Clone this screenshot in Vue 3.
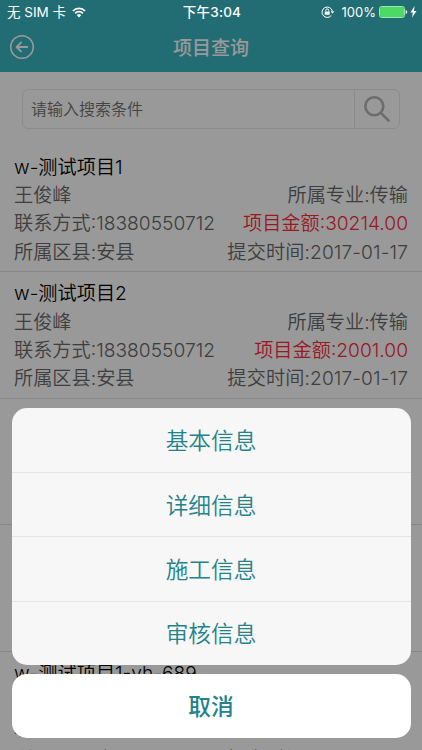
<script setup>
const projects = [
  { name: 'w-测试项目1', owner: '王俊峰', phone: '18380550712', county: '安县', major: '传输', amount: '30214.00', date: '2017-01-17' },
  { name: 'w-测试项目2', owner: '王俊峰', phone: '18380550712', county: '安县', major: '传输', amount: '2001.00', date: '2017-01-17' },
  { name: 'w-测试项目3', owner: '王俊峰', phone: '18380550712', county: '安县', major: '传输', amount: '2001.00', date: '2017-01-17' },
  { name: 'w-测试项目4', owner: '王俊峰', phone: '18380550712', county: '安县', major: '传输', amount: '2001.00', date: '2017-01-17' },
  { name: 'w-测试项目1-yh-689', owner: '王俊峰', phone: '18380550712', county: '安县', major: '传输', amount: '2001.00', date: '2017-01-17' },
]
const actions = ['基本信息', '详细信息', '施工信息', '审核信息']
</script>

<template>
  <div class="screen">
    <div class="page">
      <header class="nav">
        <svg class="back" viewBox="0 0 26 26">
          <circle cx="13" cy="13" r="11.3" />
          <path d="M18.2 13H8M12 8.6L7.6 13l4.4 4.4" />
        </svg>
        <h1>项目查询</h1>
      </header>
      <div class="search">
        <span class="hint">请输入搜索条件</span>
        <span class="go">
          <svg viewBox="0 0 28 28"><circle cx="11.3" cy="11.3" r="9" /><path d="M17.8 17.8L25.6 25.6" /></svg>
        </span>
      </div>
      <ul class="list">
        <li v-for="p in projects" :key="p.name">
          <div class="row name"><span>{{ p.name }}</span></div>
          <div class="row"><span>{{ p.owner }}</span><span>所属专业:{{ p.major }}</span></div>
          <div class="row contact"><span>联系方式:{{ p.phone }}</span><span class="amount">项目金额:{{ p.amount }}</span></div>
          <div class="row place"><span>所属区县:{{ p.county }}</span><span class="date">提交时间:{{ p.date }}</span></div>
        </li>
      </ul>
    </div>

    <div class="mask"></div>

    <div class="status">
      <div class="side">
        <span class="carrier">无 SIM 卡</span>
        <svg class="wifi" viewBox="0 0 14 11">
          <path class="arc" d="M.9 4a8.6 8.6 0 0 1 12.2 0M3.1 6.3a5.5 5.5 0 0 1 7.8 0" />
          <path class="dot" d="M7 10.6L4.8 8.2a3.1 3.1 0 0 1 4.4 0z" />
        </svg>
      </div>
      <span class="clock">下午3:04</span>
      <div class="side right">
        <svg class="lock" viewBox="0 0 14 12">
          <path class="ring" d="M10.3 9.5A5.2 5.2 0 1 1 11.3 5" />
          <path class="fill" d="M9.6 5.2h3.8L11.5 7.8zM3.7 5.4h5v3.4h-5z" />
          <path class="ring" d="M4.8 5.4V4.3a1.4 1.4 0 0 1 2.8 0v1.1" />
        </svg>
        <span class="percent">100%</span>
        <svg class="battery" viewBox="0 0 29 12">
          <rect x=".5" y=".5" width="25" height="11" rx="2" class="case" />
          <rect x="1" y="1" width="24" height="10" rx="1.5" class="charge" />
          <path d="M26.7 4v4c1-.3 1.5-1.1 1.5-2s-.5-1.7-1.5-2z" class="case-tip" />
        </svg>
        <svg class="bolt" viewBox="0 0 7 12"><path d="M4.6 0L.4 6.6h2.5L1.9 11.7 6.5 4.9H3.9z" /></svg>
      </div>
    </div>

    <div class="sheet">
      <div class="actions">
        <button v-for="a in actions" :key="a">{{ a }}</button>
      </div>
      <button class="cancel">取消</button>
    </div>
  </div>
</template>

<style>
body {
  margin: 0;
  overflow: hidden;
}
</style>

<style scoped>
.screen {
  position: relative;
  width: 422px;
  height: 750px;
  overflow: hidden;
  font-family: Inter, "Noto Sans CJK SC", sans-serif;
  background: #fff;
}
.nav {
  display: grid;
  grid-template-columns: 60px 1fr 60px;
  align-items: center;
  box-sizing: border-box;
  height: 72px;
  padding-top: 22px;
  background: #3ab4c0;
}
.back {
  width: 26px;
  height: 26px;
  margin-left: 9px;
  fill: none;
  stroke: #fff;
  stroke-width: 1.5;
  stroke-linecap: round;
  stroke-linejoin: round;
}
.back path {
  stroke-width: 1.9;
}
h1 {
  margin: 3px 0 0;
  font-size: 19px;
  line-height: 28px;
  font-weight: 500;
  text-align: center;
  color: #fff;
}
.search {
  display: flex;
  box-sizing: border-box;
  height: 40px;
  margin: 17px 22px 0;
  border: 1px solid #eaeaea;
  border-radius: 6px;
}
.hint {
  flex: 1;
  padding-left: 8px;
  font-size: 16px;
  line-height: 39px;
  font-weight: 350;
  color: #707070;
}
.go {
  width: 44px;
  border-left: 1px solid #eaeaea;
  display: flex;
  align-items: center;
  justify-content: center;
}
.go svg {
  width: 28px;
  height: 28px;
  fill: none;
  stroke: #b4b4b4;
  stroke-width: 2.6;
  stroke-linecap: round;
}
.list {
  list-style: none;
  margin: 16.5px 0 0;
  padding: 0;
}
.list li {
  box-sizing: border-box;
  height: 126.6px;
  padding: 7.1px 14px 0;
  border-bottom: 1px solid #e0e0e3;
}
.row {
  display: flex;
  justify-content: space-between;
  font-size: 19.2px;
  line-height: 28.4px;
  font-weight: 350;
  white-space: nowrap;
  color: #686868;
}
.row.name {
  color: #000;
}
.list li:last-child .contact {
  line-height: 25.4px;
}
.list li:last-child .place {
  line-height: 36px;
}
.row .amount {
  color: #ff2a3a;
}
.row .date {
  letter-spacing: 0.1px;
}
.mask {
  position: absolute;
  inset: 0;
  background: rgba(0, 0, 0, 0.4);
}
.status {
  position: absolute;
  top: 0;
  left: 0;
  right: 0;
  display: grid;
  grid-template-columns: 1fr auto 1fr;
  align-items: center;
  height: 24px;
  padding: 0 5px 0 7px;
  font-size: 13.5px;
  line-height: 24px;
  color: #fff;
}
.side {
  display: flex;
  align-items: center;
}
.right {
  justify-content: flex-end;
}
.clock {
  font-weight: 500;
  letter-spacing: 0.2px;
}
.wifi {
  width: 14px;
  height: 11px;
  margin-left: 6px;
}
.wifi .arc {
  fill: none;
  stroke: #fff;
  stroke-width: 1.7;
}
.wifi .dot {
  fill: #fff;
}
.lock {
  width: 14px;
  height: 12px;
  margin-right: 7px;
}
.lock .ring {
  fill: none;
  stroke: #fff;
  stroke-width: 1;
}
.lock .fill {
  fill: #fff;
}
.percent {
  font-size: 13px;
}
.battery {
  width: 29px;
  height: 12px;
  margin-left: 3px;
}
.battery .case {
  fill: none;
  stroke: #9ce5b5;
}
.battery .charge {
  fill: #4cd964;
}
.battery .case-tip {
  fill: #fff;
}
.bolt {
  width: 7px;
  height: 12px;
  margin-left: 2px;
  fill: #fff;
}
.sheet {
  position: absolute;
  left: 11.5px;
  right: 11.5px;
  bottom: 12px;
  display: flex;
  flex-direction: column;
  gap: 9px;
}
.actions {
  overflow: hidden;
  border-radius: 15px;
  background: #f7f7f7;
}
button {
  display: block;
  box-sizing: border-box;
  width: 100%;
  height: 64.35px;
  margin: 0;
  padding: 0 0 1px;
  border: 0;
  background: transparent;
  font-family: inherit;
  font-size: 22.7px;
  font-weight: 350;
  color: #23828a;
}
.actions button + button {
  border-top: 1px solid #e2e4e7;
}
.cancel {
  height: 64px;
  border-radius: 15px;
  background: #fff;
  font-weight: 500;
}
</style>
